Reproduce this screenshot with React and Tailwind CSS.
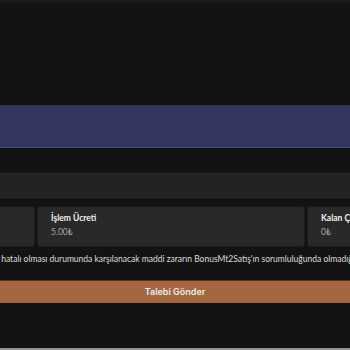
const cards = [
  { label: "Talep Tutarı", value: "0₺" },
  { label: "İşlem Ücreti", value: "5.00₺" },
  { label: "Kalan Çekim Limiti", value: "0₺" },
];

function InfoCard({ label, value }) {
  return (
    <div className="w-[268px] shrink-0 rounded-[3px] border border-[#1c1c1c] bg-[#292929] px-[13px] pt-[5px] pb-[8px]">
      <p className="text-[8.5px] font-bold leading-[12px] text-[#f2f2f2]">{label}</p>
      <p className="mt-[2px] text-[8.5px] leading-[12px] text-[#a8a8a8]">{value}</p>
    </div>
  );
}

export default function App() {
  return (
    <div className="flex h-[350px] w-[350px] flex-col overflow-hidden bg-[#131313] font-['Lato','Open_Sans',sans-serif]">
      <div className="h-[3px] bg-[#1b1b1b]" />

      <div className="mt-[102px] h-[43px] border-b border-[#4a4d75] bg-[#33365f]" />

      <div className="mt-[25px] h-[25px] border-y border-[#2c2c2c] bg-[#222222]" />

      <div className="mt-[8px] flex justify-center">
        <div className="flex shrink-0 gap-[2px] pr-[8px]">
          {cards.map((card) => (
            <InfoCard key={card.label} label={card.label} value={card.value} />
          ))}
        </div>
      </div>

      <div className="mt-[5px] flex justify-center">
        <p className="shrink-0 whitespace-nowrap pl-[8px] text-[8.5px] leading-[14px] text-[#dcdcdc]">
          Hesap bilgilerinin hatalı olması durumunda karşılanacak maddi zararın BonusMt2Satış'ın sorumluluğunda olmadığını kabul ediyorum.
        </p>
      </div>

      <button className="mt-[14px] flex h-[23px] w-full items-center justify-center border-t border-[#5a2f1c] border-b border-b-[#8c6a55] bg-[#a5673f] font-['Inter',sans-serif] text-[9px] font-semibold text-[#f5e9e0]">
        Talebi Gönder
      </button>

      <div className="mt-auto h-[2px] bg-[#8f9596]" />
    </div>
  );
}
